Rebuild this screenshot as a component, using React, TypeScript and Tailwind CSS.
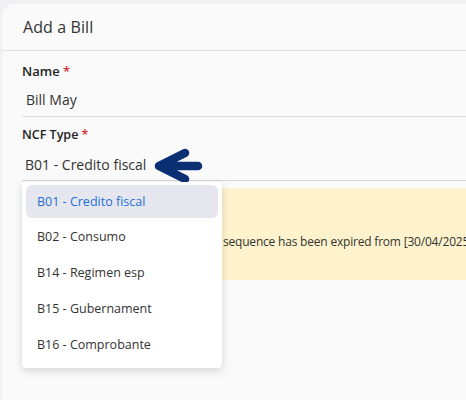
import React from 'react';

const options = [
  'B01 - Credito fiscal',
  'B02 - Consumo',
  'B14 - Regimen esp',
  'B15 - Gubernament',
  'B16 - Comprobante',
];

const App = () => {
  return (
    <div className="w-[466px] h-[400px] overflow-hidden bg-[#f1f1f3] pt-[4px] pl-[2px] font-['Open_Sans',sans-serif]">
      <div className="relative h-full rounded-tl-xl bg-[#fafafa]">
        {/* Header */}
        <div className="h-[47px] flex items-center px-[21px] border-b border-[#dcdcec]">
          <h2 className="text-[16px] text-[#333] tracking-[0.1px]">Add a Bill</h2>
        </div>

        {/* Body */}
        <div className="pl-[20px] pt-[12px]">
          <label className="block text-[13px] leading-[16px] font-semibold text-[#222]">
            Name <span className="text-[#d32f2f]">*</span>
          </label>
          <div className="h-[38px] flex items-center pt-1 pl-[4px] border-b border-[#dcdcec] text-[14px] text-[#333]">
            Bill May
          </div>

          <label className="block mt-[10px] text-[12.5px] leading-[16px] font-semibold text-[#222]">
            NCF Type <span className="text-[#d32f2f]">*</span>
          </label>
          <div className="relative h-[38px] flex items-center pt-[6px] pl-[3px] border-b border-[#d6d6e0] text-[14px] text-[#333]">
            B01 - Credito fiscal
            <svg
              className="absolute left-[128px] top-[5px]"
              width="56"
              height="40"
              viewBox="0 0 56 40"
              fill="none"
            >
              <path
                d="M48 18 H9 M35 5 L9 18 L35 31"
                stroke="#0b2f73"
                strokeWidth="8.5"
                strokeLinecap="round"
                strokeLinejoin="round"
              />
            </svg>
          </div>

          {/* Alert */}
          <div className="mt-[7px] h-[92px] bg-[#fff3cd] pt-[45px] text-[12px] tracking-[-0.2px] text-[#333] whitespace-nowrap overflow-hidden">
            <span className="inline-block w-[201px] pr-1 text-right">The B01 NCF</span>
            sequence has been expired from [30/04/2025]
          </div>
        </div>

        {/* Dropdown */}
        <div className="absolute left-[20px] top-[178px] w-[200px] h-[186px] bg-white rounded-b-sm shadow-[0_3px_8px_rgba(0,0,0,0.15)] pt-[2px] px-[4px]">
          {options.map((opt, i) => (
            <div key={opt} className="h-[35.75px] flex items-center">
              <div
                className={
                  i === 0
                    ? 'w-full h-[33px] flex items-center pl-[11px] rounded-md bg-[#e6e6ef] text-[12.5px] text-[#1f6fd9]'
                    : 'w-full h-[33px] flex items-center pl-[11px] text-[12.5px] text-[#333]'
                }
              >
                {opt}
              </div>
            </div>
          ))}
        </div>
      </div>
    </div>
  );
};

export default App;
